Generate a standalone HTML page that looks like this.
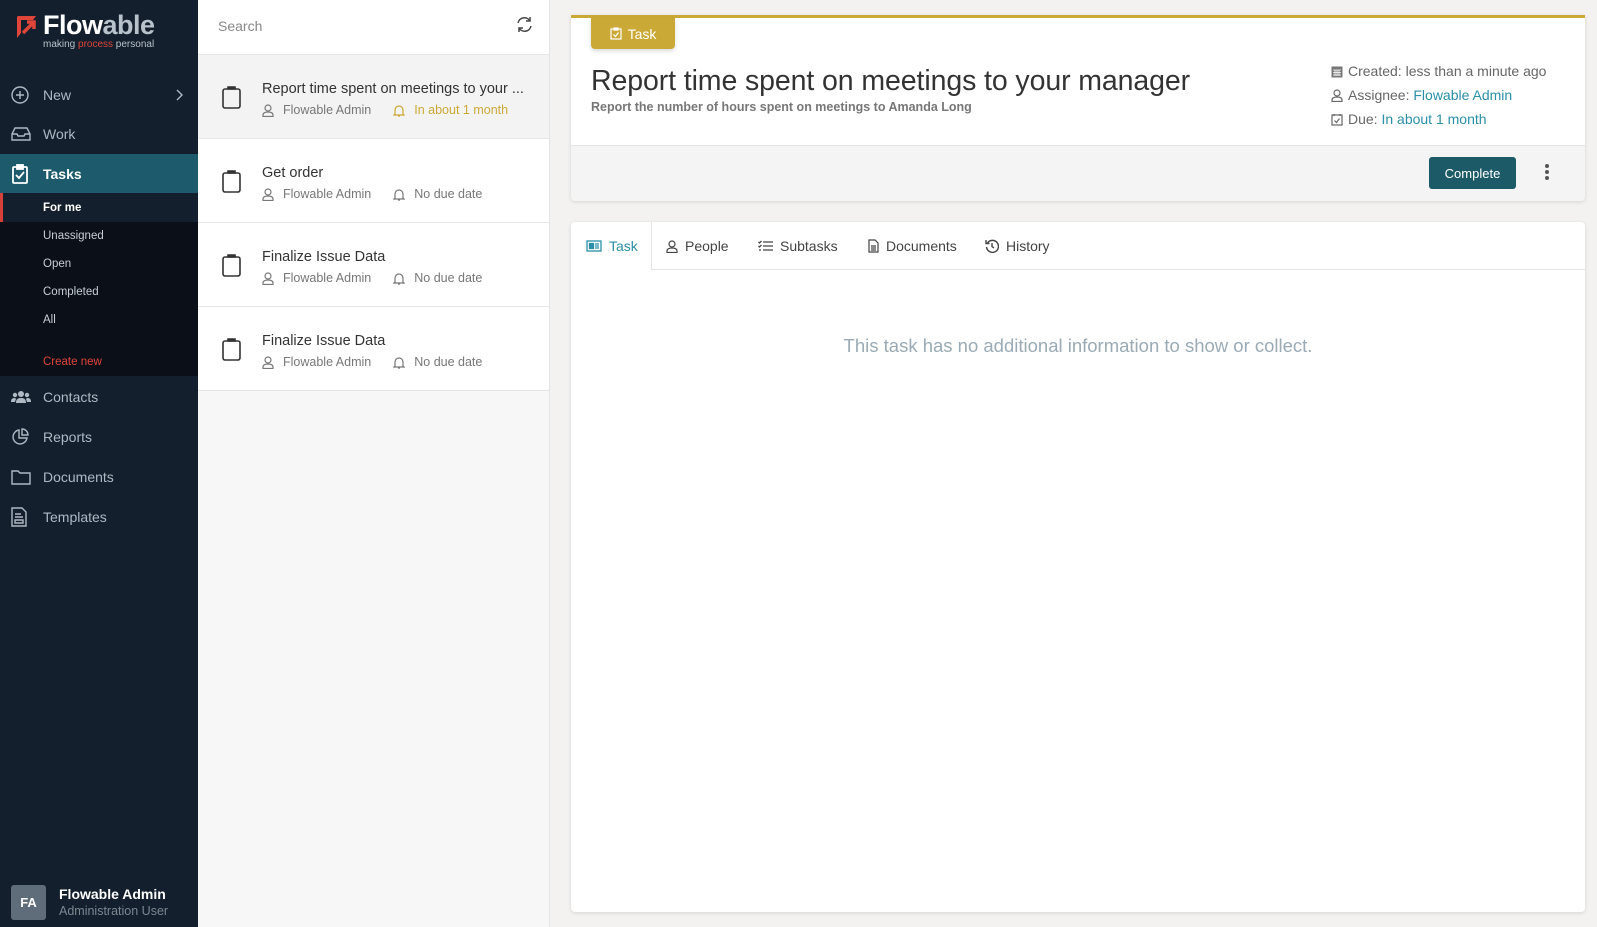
<!DOCTYPE html>
<html><head><meta charset="utf-8"><style>
*{box-sizing:border-box;margin:0;padding:0}
body{width:1597px;height:927px;overflow:hidden;background:#f3f2f1;font-family:"Liberation Sans",sans-serif;position:relative}
.sb{position:absolute;left:0;top:0;width:198px;height:927px;background:#131f2c;color:#aeb9c4}
.ni{position:absolute;left:0;width:198px;height:39px;display:flex;align-items:center;font-size:14px}
.ni svg{position:absolute;left:11px}
.ni span{position:absolute;left:43px}
.sub{position:absolute;left:0;top:222px;width:198px;height:154px;background:#0b0f17}
.si{position:absolute;left:43px;font-size:11.5px;color:#c7ced6}
.lp{position:absolute;left:198px;top:0;width:352px;height:927px;background:#f7f7f7;border-right:1px solid #e4e4e4}
.it{position:absolute;left:0;width:351px;height:84px;background:#fff;border-bottom:1px solid #e6e6e6}
.it .t{position:absolute;left:64px;top:26px;font-size:14.5px;color:#333}
.it .m{position:absolute;left:64px;top:48px;font-size:12.5px;color:#777;display:flex;align-items:center}
.it .m svg{margin-right:9px}
.card{position:absolute;left:571px;width:1014px;background:#fff;border-radius:4px;box-shadow:0 1px 4px rgba(0,0,0,.12)}
.tab{position:absolute;top:0;height:48px;display:flex;align-items:center;font-size:14px;color:#444}
.tab svg{margin-right:7px}
.teal{color:#2b8fa8}
.mi{display:flex;align-items:center}
.mi svg{margin-right:5px}
</style></head><body>
<svg width="0" height="0" style="position:absolute"><defs>
<symbol id="usr" viewBox="0 0 12 13"><g fill="none" stroke="currentColor" stroke-width="1.2"><circle cx="6" cy="4" r="3"/><path d="M1 12.5v-1.5c0-2 2-3 5-3s5 1 5 3v1.5z"/></g></symbol>
<symbol id="bell" viewBox="0 0 12 13"><g fill="none" stroke="currentColor" stroke-width="1.2"><path d="M2 10V6a4 4 0 0 1 8 0v4l1 1H1zM5 12h2"/></g></symbol>
</defs></svg>
<div class="sb">
 <svg style="position:absolute;left:14px;top:14px" width="26" height="26" viewBox="0 0 26 26"><path d="M4 2h18l-3 4H7v13L3 24V3z" fill="#e0453a"/><path d="M9 19L20 8M13 8h7v7" stroke="#e0453a" stroke-width="3.5" fill="none"/></svg>
 <div style="position:absolute;left:43px;top:10px;font-size:27px;font-weight:bold;color:#fff;letter-spacing:-0.5px">Flow<span style="color:#b8c2cb">able</span></div>
 <div style="position:absolute;left:43px;top:39px;font-size:10px;color:#b8c2cb">making <span style="color:#e0453a">process</span> personal</div>
 <div class="ni" style="top:75px"><svg width="18" height="18" viewBox="0 0 18 18" fill="none" stroke="#aeb9c4" stroke-width="1.4"><circle cx="9" cy="9" r="8"/><path d="M9 5v8M5 9h8"/></svg><span>New</span><svg style="left:176px" width="8" height="12" viewBox="0 0 8 12" fill="none" stroke="#aeb9c4" stroke-width="1.4"><path d="M1 1l5 5-5 5"/></svg></div>
 <div class="ni" style="top:114px"><svg width="20" height="16" viewBox="0 0 20 16" fill="none" stroke="#aeb9c4" stroke-width="1.4"><path d="M1 8l3-6h12l3 6v6H1zM1 8h5l1 2h6l1-2h5"/></svg><span>Work</span></div>
 <div class="ni" style="top:154px;background:#1d5b6c;color:#fff;font-weight:bold"><svg width="18" height="20" viewBox="0 0 18 20" fill="none" stroke="#fff" stroke-width="1.8"><rect x="2" y="3" width="14" height="16" rx="1"/><rect x="6" y="1" width="6" height="4" fill="#fff"/><path d="M5 11l3 3 5-6"/></svg><span>Tasks</span></div>
 <div style="position:absolute;left:0;top:193px;width:198px;height:29px;background:#131f2c;border-left:3px solid #d6403a"></div>
 <div class="si" style="top:202px;color:#fff;font-weight:bold">For me</div>
 <div class="sub"></div>
 <div class="si" style="top:230px">Unassigned</div>
 <div class="si" style="top:258px">Open</div>
 <div class="si" style="top:286px">Completed</div>
 <div class="si" style="top:314px">All</div>
 <div class="si" style="top:356px;color:#e0453a">Create new</div>
 <div class="ni" style="top:377px"><svg width="20" height="14" viewBox="0 0 20 14" fill="#aeb9c4"><circle cx="10" cy="4" r="3"/><circle cx="4" cy="5" r="2.2"/><circle cx="16" cy="5" r="2.2"/><path d="M5 13c0-4 2-5 5-5s5 1 5 5zM0 12c0-3 1-4 4-4l1 1-1 3zM20 12c0-3-1-4-4-4l-1 1 1 3z"/></svg><span>Contacts</span></div>
 <div class="ni" style="top:417px"><svg width="18" height="18" viewBox="0 0 18 18" fill="none" stroke="#aeb9c4" stroke-width="1.4"><path d="M8 2a7 7 0 1 0 8 8H8z"/><path d="M11 1a6 6 0 0 1 6 6h-6z"/></svg><span>Reports</span></div>
 <div class="ni" style="top:457px"><svg width="20" height="16" viewBox="0 0 20 16" fill="none" stroke="#aeb9c4" stroke-width="1.4"><path d="M1 2h6l2 2h10v11H1z"/></svg><span>Documents</span></div>
 <div class="ni" style="top:497px"><svg width="16" height="20" viewBox="0 0 16 20" fill="none" stroke="#aeb9c4" stroke-width="1.4"><path d="M1 1h10l4 4v14H1z"/><path d="M4 7h6M4 10h8M4 13h8v3H4z"/></svg><span>Templates</span></div>
 <div style="position:absolute;left:11px;top:885px;width:35px;height:35px;background:#5f6d7a;border-radius:3px;color:#fff;font-size:13px;font-weight:bold;display:flex;align-items:center;justify-content:center">FA</div>
 <div style="position:absolute;left:59px;top:886px;font-size:14px;font-weight:bold;color:#fff">Flowable Admin</div>
 <div style="position:absolute;left:59px;top:904px;font-size:12.5px;color:#7c8792">Administration User</div>
</div>

<div class="lp">
 <div style="position:absolute;left:0;top:0;width:351px;height:55px;background:#fff;border-bottom:1px solid #e6e6e6"></div>
 <div style="position:absolute;left:20px;top:18px;font-size:14px;color:#888">Search</div>
 <svg style="position:absolute;left:318px;top:16px" width="17" height="17" viewBox="0 0 17 17" fill="none" stroke="#444" stroke-width="1.5"><path d="M2 7a6.5 6.5 0 0 1 12-2M15 10a6.5 6.5 0 0 1-12 2"/><path d="M14 1v4h-4M3 16v-4h4"/></svg>
 <div class="it" style="top:55px;background:#f3f3f3"><svg style="position:absolute;left:24px;top:30px" width="19" height="24" viewBox="0 0 19 24" fill="none" stroke="#333" stroke-width="1.6"><rect x="1" y="4" width="17" height="19" rx="2"/><path d="M6 4V2h7v2z" fill="#333"/></svg><div class="t">Report time spent on meetings to your ...</div><div class="m"><svg width="12" height="13"><use href="#usr"/></svg>Flowable Admin<span style="color:#cba937;margin-left:22px;display:flex;align-items:center"><svg width="12" height="13"><use href="#bell"/></svg>In about 1 month</span></div></div>
 <div class="it" style="top:139px"><svg style="position:absolute;left:24px;top:30px" width="19" height="24" viewBox="0 0 19 24" fill="none" stroke="#333" stroke-width="1.6"><rect x="1" y="4" width="17" height="19" rx="2"/><path d="M6 4V2h7v2z" fill="#333"/></svg><div class="t">Get order</div><div class="m"><svg width="12" height="13"><use href="#usr"/></svg>Flowable Admin<span style="margin-left:22px;display:flex;align-items:center"><svg width="12" height="13"><use href="#bell"/></svg>No due date</span></div></div>
 <div class="it" style="top:223px"><svg style="position:absolute;left:24px;top:30px" width="19" height="24" viewBox="0 0 19 24" fill="none" stroke="#333" stroke-width="1.6"><rect x="1" y="4" width="17" height="19" rx="2"/><path d="M6 4V2h7v2z" fill="#333"/></svg><div class="t">Finalize Issue Data</div><div class="m"><svg width="12" height="13"><use href="#usr"/></svg>Flowable Admin<span style="margin-left:22px;display:flex;align-items:center"><svg width="12" height="13"><use href="#bell"/></svg>No due date</span></div></div>
 <div class="it" style="top:307px"><svg style="position:absolute;left:24px;top:30px" width="19" height="24" viewBox="0 0 19 24" fill="none" stroke="#333" stroke-width="1.6"><rect x="1" y="4" width="17" height="19" rx="2"/><path d="M6 4V2h7v2z" fill="#333"/></svg><div class="t">Finalize Issue Data</div><div class="m"><svg width="12" height="13"><use href="#usr"/></svg>Flowable Admin<span style="margin-left:22px;display:flex;align-items:center"><svg width="12" height="13"><use href="#bell"/></svg>No due date</span></div></div>
</div>

<div class="card" style="top:15px;height:186px;border-top:3px solid #cba937;background:#f4f4f4;border-radius:0 0 4px 4px">
 <div style="position:absolute;left:0;top:0;width:1014px;height:128px;background:#fff;border-bottom:1px solid #e4e4e4"></div>
 <div style="position:absolute;left:20px;top:0;width:84px;height:31px;background:#cba937;border-radius:0 0 4px 4px;color:#fff;font-size:14px;display:flex;align-items:center;justify-content:center;box-shadow:0 2px 4px rgba(0,0,0,.15)"><svg width="12" height="13" viewBox="0 0 12 13" fill="none" stroke="#fff" stroke-width="1.2" style="margin-right:6px"><rect x="1" y="2" width="10" height="10"/><path d="M4 1h4v2H4zM3.5 7.5l2 2 3-4"/></svg>Task</div>
 <div style="position:absolute;left:20px;top:47px;font-size:28.5px;color:#333;letter-spacing:-0.1px">Report time spent on meetings to your manager</div>
 <div style="position:absolute;left:20px;top:82px;font-size:12.5px;color:#777;font-weight:bold">Report the number of hours spent on meetings to Amanda Long</div>
 <div style="position:absolute;left:760px;top:41px;font-size:14px;color:#666;line-height:24px">
  <div class="mi"><svg width="12" height="13" viewBox="0 0 12 13"><rect x="0.5" y="1.5" width="11" height="11" fill="#777"/><path d="M2 5h8M2 7.5h8M2 10h8M4 5v6M6 5v6M8 5v6" stroke="#fff" stroke-width="0.8"/></svg>Created: less than a minute ago</div>
  <div class="mi"><svg width="12" height="13" style="color:#666"><use href="#usr"/></svg>Assignee:&nbsp;<span class="teal">Flowable Admin</span></div>
  <div class="mi"><svg width="12" height="13" viewBox="0 0 12 13" fill="none" stroke="#666" stroke-width="1.2"><rect x="1" y="2" width="10" height="10"/><path d="M3 1v2M9 1v2M3.5 7.5l2 2 3-4"/></svg>Due:&nbsp;<span class="teal">In about 1 month</span></div>
 </div>
 <div style="position:absolute;left:858px;top:139px;width:87px;height:32px;background:#1c5a68;border-radius:3px;color:#fff;font-size:13px;display:flex;align-items:center;justify-content:center">Complete</div>
 <div style="position:absolute;left:974px;top:146px;width:4px;line-height:6px;font-size:0">
  <div style="width:4px;height:4px;border-radius:2px;background:#555;margin-bottom:2px"></div><div style="width:4px;height:4px;border-radius:2px;background:#555;margin-bottom:2px"></div><div style="width:4px;height:4px;border-radius:2px;background:#555"></div>
 </div>
</div>

<div class="card" style="top:222px;height:690px">
 <div style="position:absolute;left:80px;top:47px;width:934px;height:1px;background:#e4e4e4"></div>
 <div style="position:absolute;left:80px;top:0;width:1px;height:48px;background:#e4e4e4"></div>
 <div class="tab teal" style="left:15px"><svg width="16" height="12" viewBox="0 0 16 12" fill="none" stroke="#2b8fa8" stroke-width="1.3"><rect x="1" y="1" width="14" height="10"/><rect x="3.5" y="3.5" width="4" height="5" fill="#2b8fa8"/><path d="M9 4h4M9 6h4M9 8h4"/></svg>Task</div>
 <div class="tab" style="left:95px"><svg width="12" height="13" style="color:#444"><use href="#usr"/></svg>People</div>
 <div class="tab" style="left:187px"><svg width="15" height="12" viewBox="0 0 15 12" fill="none" stroke="#444" stroke-width="1.3"><path d="M5 2h10M5 6h10M5 10h10M0.5 2l1 1 2-2M0.5 6l1 1 2-2M1 10h2"/></svg>Subtasks</div>
 <div class="tab" style="left:297px"><svg width="11" height="14" viewBox="0 0 11 14" fill="none" stroke="#444" stroke-width="1.2"><path d="M1 1h6l3 3v9H1z M3 7h5M3 9h5M3 11h5"/></svg>Documents</div>
 <div class="tab" style="left:414px"><svg width="14" height="14" viewBox="0 0 14 14" fill="none" stroke="#444" stroke-width="1.4"><path d="M2.5 4A6 6 0 1 1 1.5 8M1 1v3.5h3.5M7 4v3.5l2 1.5"/></svg>History</div>
 <div style="position:absolute;left:0;top:113px;width:1014px;text-align:center;font-size:18.5px;color:#9aabb6">This task has no additional information to show or collect.</div>
</div>
</body></html>
